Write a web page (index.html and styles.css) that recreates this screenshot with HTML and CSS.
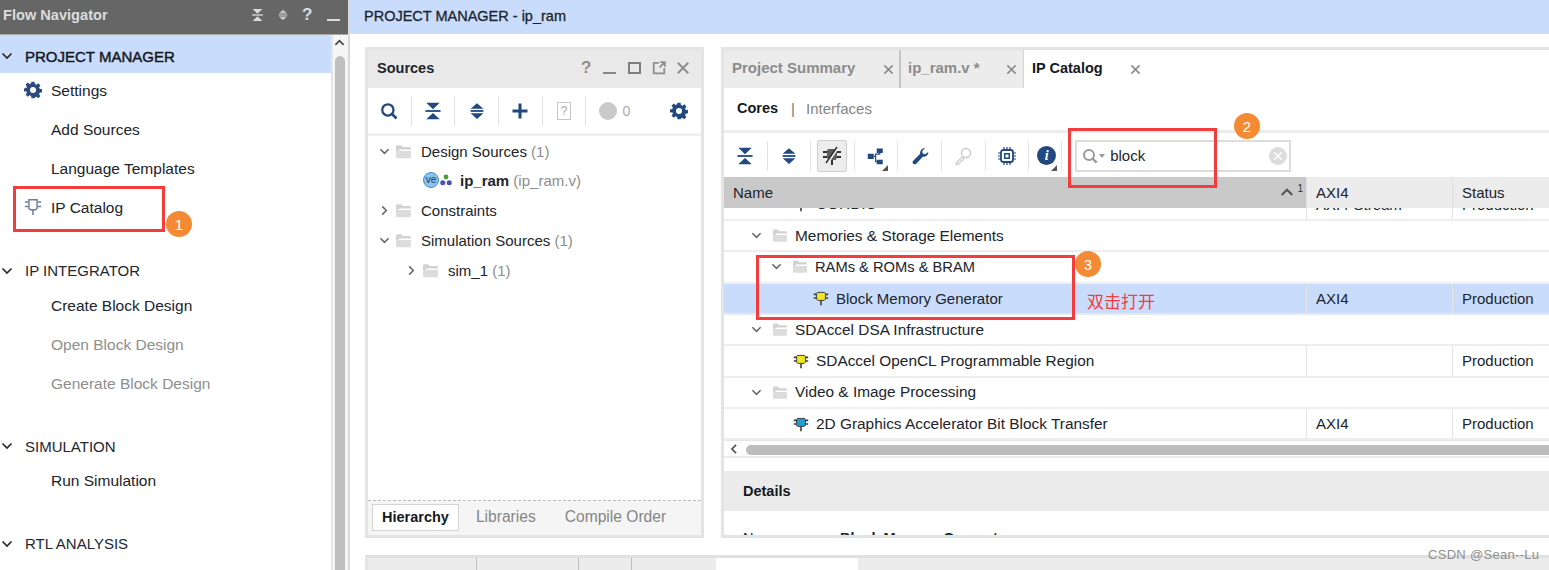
FILE: index.html
```html
<!DOCTYPE html>
<html lang="en">
<head>
<meta charset="utf-8">
<title>Flow Navigator - IP Catalog</title>
<link rel="stylesheet" href="styles.css">
</head>
<body>
<svg class="defs" width="0" height="0" aria-hidden="true">
  <symbol id="i-collapse" viewBox="0 0 24 24"><path d="M3 1h18l-9 8.500zM3 23h18l-9-8.500z"/><rect x="2" y="10.800" width="20" height="2.400"/></symbol>
  <symbol id="i-expand" viewBox="0 0 24 24"><path d="M12 1.500l8.500 7.500h-17zM12 22.500l-8.500-7.500h17z"/><rect x="3.500" y="10.800" width="17" height="2.400"/></symbol>
  <symbol id="i-chev-d" viewBox="0 0 12 12"><path d="M1.500 3.500L6 8l4.500-4.500" fill="none" stroke="currentColor" stroke-width="1.700"/></symbol>
  <symbol id="i-chev-r" viewBox="0 0 12 12"><path d="M3.500 1.500L8 6l-4.500 4.500" fill="none" stroke="currentColor" stroke-width="1.700"/></symbol>
  <symbol id="i-chev-l" viewBox="0 0 12 12"><path d="M8.500 1L3.500 6l5 5" fill="none" stroke="currentColor" stroke-width="2"/></symbol>
  <symbol id="i-chev-u" viewBox="0 0 12 12"><path d="M1.500 8.500L6 4l4.500 4.500" fill="none" stroke="currentColor" stroke-width="1.800"/></symbol>
  <symbol id="i-folder" viewBox="0 0 16 14"><path d="M1 2.500C1 1.700 1.600 1 2.400 1h3.400l1.400 1.800h6.400c.8 0 1.400.6 1.400 1.400V5H4.500L1 8z" fill="#d2d2d2"/><path d="M1 12.200V6.500h14v5.700c0 .6-.5 1.100-1.200 1.100H2.200C1.500 13.300 1 12.800 1 12.200z" fill="#dcdcdc"/></symbol>
  <symbol id="i-gear" viewBox="0 0 24 24"><path fill-rule="evenodd" d="M10 1h4l.6 3.100 1.900.8 2.600-1.800 2.800 2.800-1.800 2.600.8 1.900 3.100.6v4l-3.100.6-.8 1.900 1.800 2.600-2.800 2.800-2.600-1.800-1.900.8L14 23h-4l-.6-3.100-1.900-.8-2.600 1.800-2.800-2.800 1.800-2.600-.8-1.900L0 14v-4l3.100-.6.8-1.900L2.100 4.900l2.800-2.800 2.600 1.800 1.900-.8zM12 8a4 4 0 1 0 0 8 4 4 0 0 0 0-8z"/></symbol>
  <symbol id="i-ip" viewBox="0 0 20 20"><path d="M1 5.500h4M1 10h4M15 5.500h4M15 10h4M10 13v6" fill="none" stroke="#3c3c3c" stroke-width="2"/><path d="M5.500 3h9l1 1.500v7L14 13H6l-1.500-1.500v-7z" fill="currentColor" stroke="#3c3c3c" stroke-width="1.200"/></symbol>
  <symbol id="i-ip-o" viewBox="0 0 20 20"><path d="M1 4.500h4M1 9.500h4M15 4.500h4M15 9.500h4M10 13v6" fill="none" stroke="#6d7d9e" stroke-width="1.700"/><path d="M5.500 2h9v9.500L13 13H7l-1.500-1.500z" fill="#fff" stroke="#6d7d9e" stroke-width="1.600"/></symbol>
  <symbol id="i-search" viewBox="0 0 24 24"><circle cx="10.500" cy="10.500" r="7.500" fill="none" stroke="currentColor" stroke-width="3"/><path d="M15.500 15.500L22 22" stroke="currentColor" stroke-width="3.500"/></symbol>
  <symbol id="i-x" viewBox="0 0 12 12"><path d="M1.500 1.500l9 9M10.500 1.500l-9 9" stroke="currentColor" stroke-width="1.700"/></symbol>
  <symbol id="i-caret" viewBox="0 0 8 8"><path d="M8 0v8H0z"/></symbol>
</svg>

<div class="app">
  <aside class="nav">
    <header class="nav-head">
      <span class="nav-title">Flow Navigator</span>
      <span class="nav-tools">
        <svg class="ni"><use href="#i-collapse"/></svg>
        <svg class="ni ni-s"><use href="#i-expand"/></svg>
        <span class="nav-q">?</span>
        <span class="nav-min"></span>
      </span>
    </header>
    <div class="nav-body">
      <div class="nav-tree">
        <section class="sec">
          <h2 class="sec-head sec-active"><svg class="sec-chev"><use href="#i-chev-d"/></svg><span class="sec-strong">PROJECT MANAGER</span></h2>
          <ul class="sec-items">
            <li class="item"><svg class="item-ico gear"><use href="#i-gear"/></svg>Settings</li>
            <li class="item">Add Sources</li>
            <li class="item">Language Templates</li>
            <li class="item"><svg class="item-ico"><use href="#i-ip-o"/></svg>IP Catalog</li>
          </ul>
        </section>
        <section class="sec">
          <h2 class="sec-head"><svg class="sec-chev"><use href="#i-chev-d"/></svg>IP INTEGRATOR</h2>
          <ul class="sec-items">
            <li class="item">Create Block Design</li>
            <li class="item item-off">Open Block Design</li>
            <li class="item item-off">Generate Block Design</li>
          </ul>
        </section>
        <section class="sec">
          <h2 class="sec-head"><svg class="sec-chev"><use href="#i-chev-d"/></svg>SIMULATION</h2>
          <ul class="sec-items">
            <li class="item">Run Simulation</li>
          </ul>
        </section>
        <section class="sec">
          <h2 class="sec-head"><svg class="sec-chev"><use href="#i-chev-d"/></svg>RTL ANALYSIS</h2>
        </section>
      </div>
      <div class="vscroll">
        <svg class="vscroll-up"><use href="#i-chev-u"/></svg>
        <div class="vscroll-thumb"></div>
      </div>
    </div>
  </aside>

  <main class="main">
    <div class="main-title">PROJECT MANAGER - ip_ram</div>
    <div class="panels">
      <section class="panel src">
        <header class="src-head">
          <span class="src-title">Sources</span>
          <span class="src-win">
            <span class="win-q">?</span>
            <span class="win-min"></span>
            <span class="win-max"></span>
            <svg class="win-ext" viewBox="0 0 12 12"><path d="M6 1.500H1.500v9h9V6M7 1h4v4M11 1L6.500 5.500" fill="none" stroke="currentColor" stroke-width="1.500"/></svg>
            <svg class="win-x"><use href="#i-x"/></svg>
          </span>
        </header>
        <div class="tools src-tools">
          <span class="tool"><svg class="ti"><use href="#i-search"/></svg></span>
          <span class="tool"><svg class="ti"><use href="#i-collapse"/></svg></span>
          <span class="tool"><svg class="ti"><use href="#i-expand"/></svg></span>
          <span class="tool"><svg class="ti" viewBox="0 0 24 24"><path d="M10 2h4v8h8v4h-8v8h-4v-8H2v-4h8z"/></svg></span>
          <span class="tool"><span class="help-doc">?</span></span>
          <span class="tool tool-plain"><span class="dot"></span><span class="dot-n">0</span></span>
          <span class="tool tool-end"><svg class="ti-gear"><use href="#i-gear"/></svg></span>
        </div>
        <div class="tree">
          <div class="tn"><svg class="chev"><use href="#i-chev-d"/></svg><svg class="fold"><use href="#i-folder"/></svg>Design Sources<span class="muted">&nbsp;(1)</span></div>
          <div class="tn tn-file">
            <span class="ve">ve</span>
            <svg class="mods" viewBox="0 0 10 10"><circle cx="5" cy="2.500" r="2" fill="#4d9a3f"/><circle cx="2.300" cy="7.300" r="2.100" fill="#4a4fb0"/><circle cx="7.700" cy="7.300" r="2.100" fill="#4a4fb0"/></svg>
            <b>ip_ram</b><span class="muted">&nbsp;(ip_ram.v)</span>
          </div>
          <div class="tn"><svg class="chev"><use href="#i-chev-r"/></svg><svg class="fold"><use href="#i-folder"/></svg>Constraints</div>
          <div class="tn"><svg class="chev"><use href="#i-chev-d"/></svg><svg class="fold"><use href="#i-folder"/></svg>Simulation Sources<span class="muted">&nbsp;(1)</span></div>
          <div class="tn tn-sub"><svg class="chev"><use href="#i-chev-r"/></svg><svg class="fold"><use href="#i-folder"/></svg>sim_1<span class="muted">&nbsp;(1)</span></div>
        </div>
        <nav class="src-tabs">
          <span class="src-tab src-tab-on">Hierarchy</span>
          <span class="src-tab">Libraries</span>
          <span class="src-tab">Compile Order</span>
        </nav>
      </section>

      <section class="panel cat">
        <nav class="cat-tabs">
          <span class="cat-tab t1">Project Summary<svg class="tab-x"><use href="#i-x"/></svg></span>
          <span class="cat-tab t2">ip_ram.v *<svg class="tab-x"><use href="#i-x"/></svg></span>
          <span class="cat-tab t3">IP Catalog<svg class="tab-x"><use href="#i-x"/></svg></span>
        </nav>
        <div class="subtabs"><b>Cores</b><span class="pipe">|</span><span class="sub-off">Interfaces</span></div>
        <div class="tools cat-tools">
          <span class="tool"><svg class="ti"><use href="#i-collapse"/></svg></span>
          <span class="tool"><svg class="ti"><use href="#i-expand"/></svg></span>
          <span class="tool"><span class="pressed"><svg class="ti-bug" viewBox="0 0 20 20"><path d="M1 6h4M1 11h4M15 6h4M15 11h4M10 14v5" fill="none" stroke="#333" stroke-width="2"/><path d="M6 3h8l1 1.500V12l-1.500 2h-7L5 12V4.500z" fill="#5c5c5c"/><path d="M5 18L16 2" stroke="#eee" stroke-width="2"/><path d="M4 17L15 1" stroke="#333" stroke-width="1.500"/></svg></span></span>
          <span class="tool"><svg class="ti" viewBox="0 0 24 24"><rect x="1" y="9" width="8" height="7"/><rect x="13" y="2" width="8" height="6"/><rect x="13" y="17" width="8" height="6"/><path d="M9 12.500h2.500M17 8v1.500h-5.500v10H13" fill="none" stroke="#21497f" stroke-width="1.600"/></svg><svg class="tc"><use href="#i-caret"/></svg></span>
          <span class="tool"><svg class="ti" viewBox="0 0 24 24"><path d="M23 6.500c.3 3.600-2.800 6.800-6.800 6.300L7 22.200c-1.200 1.200-3 1.200-4 .2-1.200-1.200-1.200-2.800 0-4l9.200-9.300C11.600 5 15 1.200 19 1.400l-4 4 .6 3.400 3.400.7z"/></svg></span>
          <span class="tool"><svg class="ti ti-key" viewBox="0 0 24 24"><circle cx="16" cy="8" r="6" fill="none" stroke="#c8c8c8" stroke-width="1.800"/><path d="M11.500 12.500L3 21v2h3l1-2 2-1 1-2 2-1 1.500-3" fill="none" stroke="#c8c8c8" stroke-width="1.800"/></svg></span>
          <span class="tool"><svg class="ti" viewBox="0 0 24 24"><rect x="4" y="4" width="16" height="16" rx="3" fill="none" stroke="#21497f" stroke-width="2.400"/><rect x="9" y="9" width="6" height="6" fill="none" stroke="#21497f" stroke-width="2"/><path d="M8 0v4M12 0v4M16 0v4M8 20v4M12 20v4M16 20v4M0 8h4M0 12h4M0 16h4M20 8h4M20 12h4M20 16h4" stroke="#21497f" stroke-width="1.600"/></svg></span>
          <span class="tool tool-info"><span class="info">i</span><svg class="tc tc-info"><use href="#i-caret"/></svg></span>
          <div class="search">
            <svg class="s-ico"><use href="#i-search"/></svg>
            <span class="s-caret"></span>
            <span class="s-text">block</span>
            <span class="s-clear"><svg class="s-clear-x"><use href="#i-x"/></svg></span>
          </div>
        </div>
        <div class="thead">
          <div class="th th-name">Name<span class="sort"><svg class="sort-up"><use href="#i-chev-u"/></svg><sup class="sort-n">1</sup></span></div>
          <div class="th th-col">AXI4</div>
          <div class="th th-col th-last">Status</div>
        </div>
        <div class="tbody">
          <div class="row row-clip row-cols"><div class="c-name ind-3"><svg class="ipi ipi-y"><use href="#i-ip"/></svg>CORDIC</div><div class="c-col">AXI4-Stream</div><div class="c-col">Production</div></div>
          <div class="row"><div class="c-name ind-1"><svg class="chev"><use href="#i-chev-d"/></svg><svg class="fold"><use href="#i-folder"/></svg>Memories &amp; Storage Elements</div></div>
          <div class="row"><div class="c-name ind-2"><svg class="chev"><use href="#i-chev-d"/></svg><svg class="fold"><use href="#i-folder"/></svg>RAMs &amp; ROMs &amp; BRAM</div></div>
          <div class="row row-cols row-sel"><div class="c-name ind-4"><svg class="ipi ipi-y"><use href="#i-ip"/></svg>Block Memory Generator</div><div class="c-col">AXI4</div><div class="c-col">Production</div></div>
          <div class="row"><div class="c-name ind-1"><svg class="chev"><use href="#i-chev-d"/></svg><svg class="fold"><use href="#i-folder"/></svg>SDAccel DSA Infrastructure</div></div>
          <div class="row row-cols"><div class="c-name ind-3"><svg class="ipi ipi-y"><use href="#i-ip"/></svg>SDAccel OpenCL Programmable Region</div><div class="c-col"></div><div class="c-col">Production</div></div>
          <div class="row"><div class="c-name ind-1"><svg class="chev"><use href="#i-chev-d"/></svg><svg class="fold"><use href="#i-folder"/></svg>Video &amp; Image Processing</div></div>
          <div class="row row-cols"><div class="c-name ind-3"><svg class="ipi ipi-b"><use href="#i-ip"/></svg>2D Graphics Accelerator Bit Block Transfer</div><div class="c-col">AXI4</div><div class="c-col">Production</div></div>
        </div>
        <div class="hscroll"><svg class="hs-left"><use href="#i-chev-l"/></svg><div class="hs-thumb"></div></div>
        <div class="details-head">Details</div>
        <div class="details-row"><span class="d-key">Name:</span><b>Block Memory Generator</b></div>
      </section>
    </div>
    <section class="bottom">
      <nav class="bot-tabs">
        <span class="bot-tab b1">Tcl Console</span>
        <span class="bot-tab b2">Messages</span>
        <span class="bot-tab b3">Log</span>
        <span class="bot-tab b4">Reports</span>
        <span class="bot-tab b5">Design Runs</span>
      </nav>
    </section>
  </main>

  <div class="mark m1"></div><span class="badge b-1">1</span>
  <div class="mark m2"></div><span class="badge b-2">2</span>
  <div class="mark m3"></div><span class="badge b-3">3</span>
  <span class="note">双击打开</span>
  <span class="wm">CSDN @Sean--Lu</span>
</div>
</body>
</html>
```

FILE: styles.css
```css
* { box-sizing: border-box; }
html, body { margin: 0; padding: 0; background: #fff; }
body { width: 1549px; height: 570px; overflow: hidden; font-family: "Liberation Sans", Arial, sans-serif; font-size: 15px; color: #20242c; }
.defs { position: absolute; }
ul { list-style: none; margin: 0; padding: 0; }
h2 { margin: 0; font: inherit; }
svg { display: block; flex: none; }

.app { position: relative; display: flex; width: 1549px; height: 570px; overflow: hidden; }

/* Flow navigator */
.nav { flex: none; width: 350px; height: 570px; display: flex; flex-direction: column; border-right: 2px solid #d9d9d9; }
.nav-head { flex: none; height: 35px; background: #666; border-bottom: 1px solid #a9a9a9; display: flex; align-items: center; justify-content: space-between; padding: 0 8px 4px 3px; color: #dcdcdc; }
.nav-title { font-weight: bold; font-size: 14.600px; }
.nav-tools { display: flex; align-items: center; gap: 12px; }
.ni { width: 13px; height: 14px; fill: #dcdcdc; }
.ni-s { width: 12px; margin-left: 1px; fill: #c4c4c4; }
.nav-q { font-weight: bold; font-size: 17px; width: 12px; margin-left: 1px; }
.nav-min { width: 13px; height: 2px; background: #dcdcdc; margin-top: 10px; margin-left: 1px; }
.nav-body { flex: 1; display: flex; min-height: 0; }
.nav-tree { flex: none; width: 331px; overflow: hidden; }
.sec { margin-bottom: 22px; }
.sec-head { height: 38px; padding-top: 4px; display: flex; align-items: center; font-size: 15px; color: #23272f; }
.sec-active { background: #c9dcfb; }
.sec-strong { -webkit-text-stroke: .45px #14181f; color: #14181f; }
.sec-chev { width: 12px; height: 12px; margin: 0 12px 0 1px; color: #2a2a2a; }
.sec-items { margin-top: -1.500px; }
.item { height: 39px; display: flex; align-items: center; padding-left: 51px; position: relative; font-size: 15.500px; color: #20242c; }
.item-off { color: #8e8e8e; }
.item-ico { position: absolute; left: 24px; top: 9px; width: 18px; height: 18px; }
.gear { fill: #2b4a7e; }
.vscroll { flex: 1; position: relative; background: #f5f5f5; border-left: 2px solid #e6e6e6; }
.vscroll-up { position: absolute; left: 1px; top: 2px; width: 11px; height: 11px; color: #444; }
.vscroll-thumb { position: absolute; left: 2px; right: 3px; top: 21px; height: 600px; background: #bfbfbf; border-radius: 5px; }

/* Main */
.main { flex: none; width: 1199px; height: 570px; display: flex; flex-direction: column; overflow: hidden; }
.main-title { flex: none; height: 34px; background: #c9dcfb; padding: 0 0 3px 14px; display: flex; align-items: center; font-size: 14.500px; color: #20242c; -webkit-text-stroke: .3px #20242c; }
.panels { flex: none; display: flex; gap: 17px; padding: 13px 0 0 15px; }
.panel { flex: none; height: 491px; border: 3px solid #e4e4e4; display: flex; flex-direction: column; overflow: hidden; background: #fff; }

/* Sources */
.src { width: 339px; }
.src-head { flex: none; height: 38px; background: #e9e9e9; display: flex; align-items: center; justify-content: space-between; padding: 0 11px 2px 9px; }
.src-title { font-weight: bold; font-size: 14.500px; }
.src-win { display: flex; align-items: center; gap: 10px; color: #8e8e8e; }
.win-q { font-weight: bold; font-size: 17px; width: 12px; }
.win-min { width: 13px; height: 2px; background: #888; margin-top: 9px; margin-left: 0; }
.win-max { width: 13px; height: 12px; border: 2px solid #7f7f7f; margin-left: 2px; }
.win-ext { width: 14px; height: 14px; margin-left: 1px; }
.win-x { width: 14px; height: 14px; }
.tools { flex: none; height: 45px; display: flex; align-items: center; }
.tool { flex: none; width: 43.700px; height: 30px; display: flex; align-items: center; justify-content: center; border-right: 1px solid #e2e2e2; position: relative; }
.tool-plain { border-right: 0; justify-content: flex-start; padding-left: 13px; width: 60px; }
.tool-end { border-right: 0; margin-left: auto; width: 42px; padding-right: 2px; }
.ti { width: 18px; height: 18px; fill: #21497f; color: #21497f; }
.ti-key { opacity: .95; }
.ti-gear { width: 18px; height: 18px; fill: #21497f; }
.help-doc { width: 14px; height: 18px; border: 1px solid #c6c6c6; color: #aaa; font-size: 12px; display: flex; align-items: center; justify-content: center; }
.dot { width: 18px; height: 18px; border-radius: 50%; background: #c9c9c9; }
.dot-n { color: #aaa; margin-left: 5px; font-size: 14px; }
.tree { flex: 1; border-top: 3px solid #f0f0f0; padding-top: 1px; }
.tn { height: 30px; display: flex; align-items: center; padding-left: 11px; font-size: 15px; color: #20242c; }
.tn:first-child { height: 28px; }
.chev { width: 11px; height: 11px; color: #666; margin-right: 5px; }
.fold { width: 17px; height: 15px; margin-right: 9px; }
.tn-file { padding-left: 55px; }
.tn-sub { padding-left: 38px; }
.ve { width: 16px; height: 16px; border-radius: 50%; background: #8cc2ea; border: 1px solid #3f8fcf; color: #16406f; font-size: 10px; display: flex; align-items: center; justify-content: center; line-height: 1; }
.mods { width: 12px; height: 12px; margin: 0 8px 0 1px; }
.muted { color: #8d8d8d; }
.src-tabs { flex: none; height: 35px; background: #f5f5f5; border-top: 1px dashed #bdbdbd; display: flex; align-items: center; padding: 0 4px 2px; color: #858585; font-size: 15.600px; }
.src-tab { height: 27px; display: flex; align-items: center; padding: 0; margin-right: 29px; }
.src-tab-on { background: #fff; border: 1px solid #d4d4d4; color: #14181f; font-weight: bold; padding: 0 9px; margin-right: 17px; font-size: 14.500px; }

/* IP catalog */
.cat { width: 840px; }
.cat-tabs { flex: none; height: 38px; display: flex; }
.cat-tab { display: flex; align-items: center; height: 38px; position: relative; font-weight: bold; font-size: 15px; padding-bottom: 3px; }
.t1 { width: 175px; padding-left: 8px; background: #ececec; color: #8b8b8b; }
.t2 { width: 125px; padding-left: 7px; background: #ececec; color: #8b8b8b; border-left: 2px solid #c6c6c6; border-right: 1px solid #d6d6d6; }
.t3 { width: 124px; padding-left: 8px; color: #14181f; font-size: 14.500px; }
.tab-x { position: absolute; right: 5px; top: 14px; width: 11px; height: 11px; color: #8b8b8b; }
.t2 .tab-x { right: 6px; }
.t3 .tab-x { right: 7px; }
.subtabs { flex: none; height: 45px; display: flex; align-items: center; padding: 0 0 2px 13px; font-size: 15px; border-bottom: 3px solid #ececec; }
.subtabs b { color: #14181f; font-size: 14.500px; }
.pipe { margin: 0 11px 0 13px; color: #777; }
.sub-off { color: #858585; }
.cat-tools { height: 44px; padding-top: 1px; }
.cat-tools .tool { width: 43.600px; }
.cat-tools .tool-info { width: 33px; }
.pressed { width: 30px; height: 32px; background: #ececec; border: 1px solid #cfcfcf; border-radius: 2px; display: flex; align-items: center; justify-content: center; }
.ti-bug { width: 20px; height: 20px; }
.tc { position: absolute; right: 9px; bottom: 0; width: 6px; height: 6px; fill: #555; }
.tc-info { right: 4px; }
.info { width: 19px; height: 19px; border-radius: 50%; background: #21497f; color: #fff; font: italic bold 14px "Liberation Serif", serif; display: flex; align-items: center; justify-content: center; margin-left: 3px; }
.search { flex: none; width: 216px; height: 32px; margin-left: 13px; border: 2px solid #dcdcdc; display: flex; align-items: center; padding-left: 5px; position: relative; }
.s-ico { width: 16px; height: 16px; color: #9a9a9a; }
.s-caret { width: 0; height: 0; border: 3.500px solid transparent; border-top: 4px solid #9a9a9a; border-bottom: 0; margin: 1px 0 0 1px; }
.s-text { margin-left: 5px; font-size: 15px; color: #20242c; }
.s-clear { position: absolute; right: 2px; top: 5px; width: 18px; height: 18px; border-radius: 50%; background: #dcdcdc; display: flex; align-items: center; justify-content: center; }
.s-clear-x { width: 10px; height: 10px; color: #fff; }
.thead { flex: none; height: 31px; display: flex; }
.th { flex: none; height: 31px; display: flex; align-items: center; background: #ececec; border-left: 1px solid #e0e0e0; padding-left: 9px; font-size: 15px; }
.th-name { width: 582px; background: #c9c9c9; border-left: 0; position: relative; }
.th-col { width: 146px; }
.th-last { width: 110px; }
.sort { position: absolute; right: 3px; top: 5px; display: flex; align-items: flex-start; color: #555; }
.sort-up { width: 14px; height: 14px; margin-top: 3px; }
.sort-n { font-size: 10px; line-height: 1; margin: 2px 0 0 3px; vertical-align: baseline; color: #333; }
.tbody { flex: none; height: 233px; overflow: hidden; border-bottom: 1px solid #e6e6e6; }
.row { height: 31.330px; display: flex; border-bottom: 2px solid #eeeeee; font-size: 15px; }
.row-clip { margin-top: -18.330px; }
.row-sel { background: #c9dcfb; border-bottom-color: #e8e8e8; }
.c-name { width: 582px; flex: none; display: flex; align-items: center; font-size: 15.400px; }
.c-col { width: 146px; flex: none; display: flex; align-items: center; padding-left: 9px; border-left: 1px solid #e6e6e6; }
.c-name .chev { margin-right: 10px; }
.c-name .fold { width: 16px; margin-right: 7px; }
.c-name.ind-1 { padding-left: 27px; }
.c-name.ind-2 { padding-left: 47px; font-size: 14.700px; }
.c-name.ind-3 { padding-left: 69px; }
.c-name.ind-4 { padding-left: 89px; font-size: 15px; }
.ipi { width: 16px; height: 16px; margin-right: 7px; }
.ipi-y { color: #f2e61e; }
.ipi-b { color: #1b9fd4; }
.hscroll { flex: none; height: 17px; position: relative; border-bottom: 2px solid #ececec; background: #fff; }
.hs-left { position: absolute; left: 5px; top: 3px; width: 10px; height: 10px; color: #555; }
.hs-thumb { position: absolute; left: 22px; right: 0; top: 4px; height: 10px; background: #bdbdbd; border-radius: 5px 0 0 5px; }
.details-head { flex: none; height: 40px; margin-top: 13px; background: #ebebeb; display: flex; align-items: center; padding-left: 19px; font-weight: bold; font-size: 14.500px; color: #14181f; }
.details-row { flex: none; height: 30px; margin-top: 12px; display: flex; align-items: center; padding-left: 19px; font-size: 14.500px; }
.d-key { width: 97px; }

/* Bottom panel */
.bottom { flex: none; height: 40px; margin: 17px 0 0 15px; border-top: 3px solid #e0e0e0; border-left: 3px solid #e4e4e4; background: #ececec; overflow: hidden; }
.bot-tabs { display: flex; height: 40px; color: #9a9a9a; font-size: 14.500px; font-weight: bold; }
.bot-tab { height: 40px; padding: 11px 0 0 7px; border-right: 1px solid #bdbdbd; }
.b1 { width: 109px; }
.b2 { width: 102px; }
.b3 { width: 53px; }
.b4 { width: 84px; border-right: 0; }
.b5 { width: 142px; background: #fff; border-right: 0; }

/* Annotations */
.mark { position: absolute; border: 3px solid #f33c3c; }
.m1 { left: 13px; top: 186px; width: 152px; height: 46px; }
.m2 { left: 1068px; top: 128px; width: 149px; height: 60px; }
.m3 { left: 756px; top: 255px; width: 319px; height: 65px; }
.badge { position: absolute; width: 26px; height: 26px; border-radius: 50%; background: #f58a35; color: #fff; font-size: 15px; display: flex; align-items: center; justify-content: center; }
.b-1 { left: 166px; top: 211px; }
.b-2 { left: 1234px; top: 113px; }
.b-3 { left: 1075px; top: 251px; }
.note { position: absolute; left: 1087px; top: 291px; font-family: "Noto Sans CJK SC", "Liberation Sans", sans-serif; font-size: 17px; line-height: 20px; color: #f33c3c; }
.wm { position: absolute; left: 1428px; top: 547px; font-size: 13px; line-height: 16px; letter-spacing: .3px; color: #8f8f8f; }
```
